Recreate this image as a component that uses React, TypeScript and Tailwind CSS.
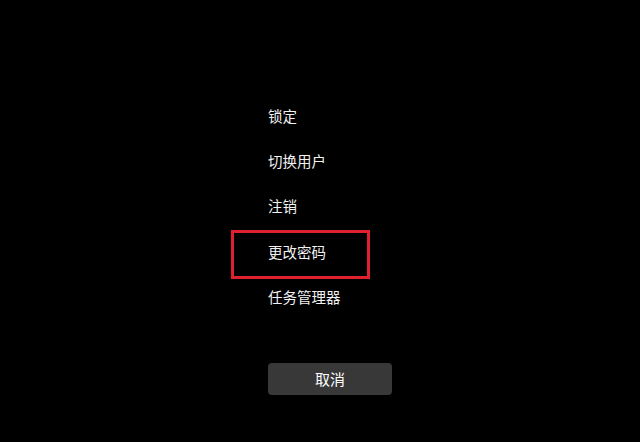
import React from 'react';

const options = ['锁定', '切换用户', '注销', '更改密码', '任务管理器'];

const App = () => {
  return (
    <div
      className="w-[640px] h-[442px] bg-black text-[#f2f2f2] overflow-hidden"
      style={{ fontFamily: '"Noto Sans CJK SC", "Noto Sans", sans-serif' }}
    >
      <div className="flex flex-col pl-[268px] pt-[93px]">
        {options.map((label) => (
          <div key={label} className="relative h-[45.3px] flex items-center text-[14.5px] leading-5">
            {label === '更改密码' && (
              <div className="absolute left-[-37px] top-[1px] w-[139px] h-[49px] border-[3px] border-[#e0202e]" />
            )}
            <span>{label}</span>
          </div>
        ))}
        <button className="mt-[43.5px] w-[124px] h-[32px] rounded-[4px] bg-[#383838] text-[15px] text-white">
          取消
        </button>
      </div>
    </div>
  );
};

export default App;
